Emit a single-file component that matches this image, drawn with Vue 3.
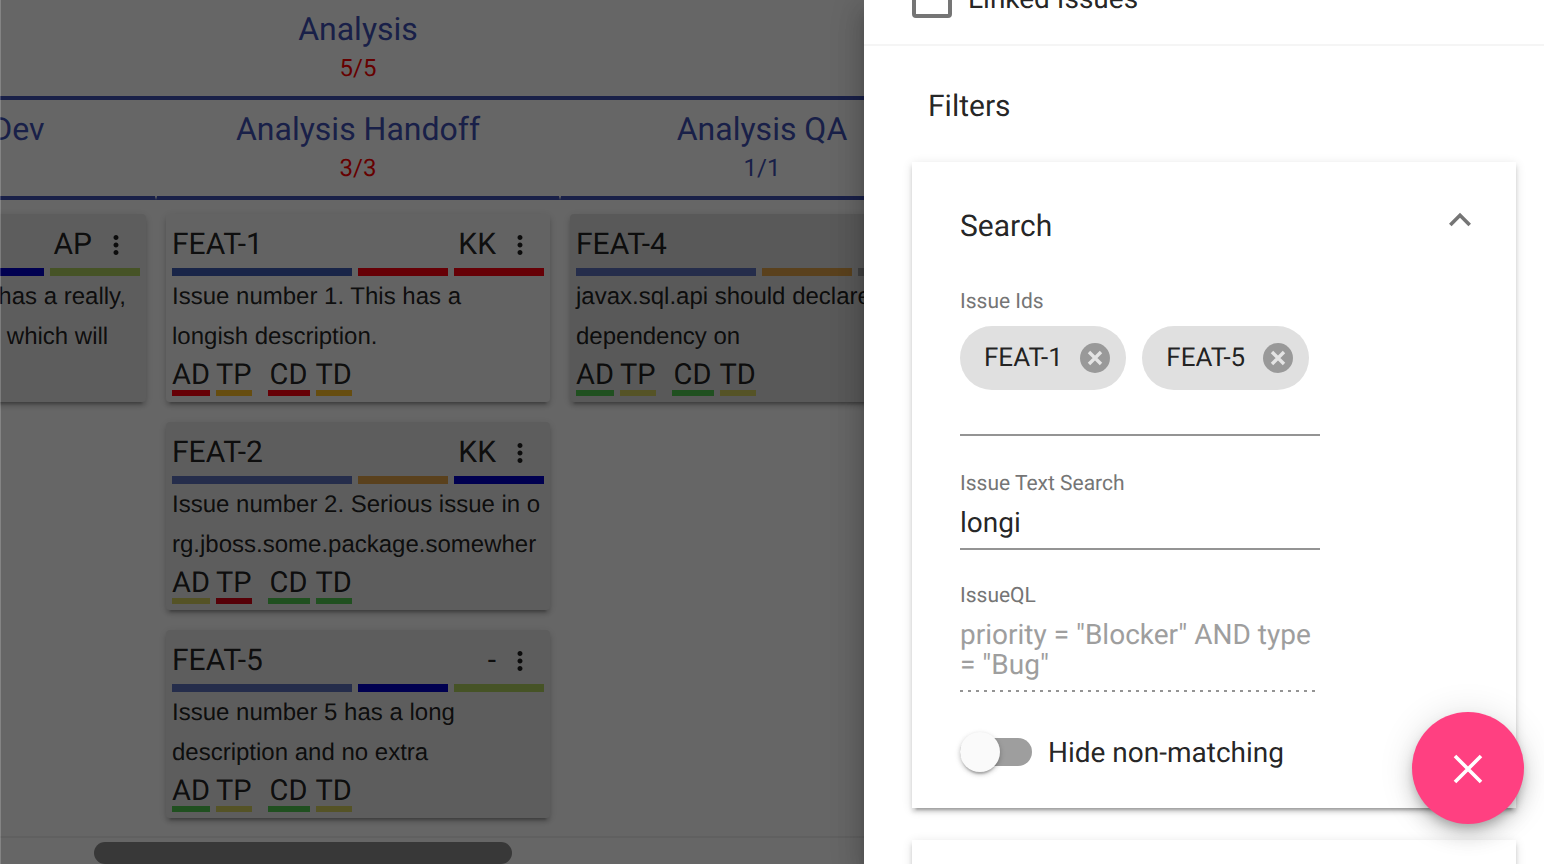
<template>
  <div class="page">
    <!-- 看板 -->
    <div class="board">
      <div class="board-view">
        <div class="board-inner">
          <div class="group-head">
            <div class="head-title">Analysis</div>
            <div class="head-count over">5/5</div>
          </div>
          <div class="state-heads">
            <div v-for="col in columns" :key="col.name" class="state-head">
              <div class="head-title">{{ col.name }}</div>
              <div class="head-count" :class="{ over: col.over }">{{ col.count }}</div>
            </div>
          </div>
          <div class="state-cols">
            <div v-for="col in columns" :key="col.name" class="state-col">
              <div
                v-for="issue in col.issues"
                :key="issue.key"
                class="issue"
                :class="issue.shade">
                <div class="issue-top">
                  <span class="issue-key">{{ issue.key }}</span>
                  <span class="issue-owner">{{ issue.owner }}</span>
                  <svg class="kebab" viewBox="0 0 24 24">
                    <path d="M12 8c1.1 0 2-.9 2-2s-.9-2-2-2-2 .9-2 2 .9 2 2 2zm0 2c-1.1 0-2 .9-2 2s.9 2 2 2 2-.9 2-2-.9-2-2-2zm0 6c-1.1 0-2 .9-2 2s.9 2 2 2 2-.9 2-2-.9-2-2-2z" />
                  </svg>
                </div>
                <div class="issue-bars">
                  <span class="bar wide" :class="issue.bars[0]"></span>
                  <span class="bar" :class="issue.bars[1]"></span>
                  <span class="bar" :class="issue.bars[2]"></span>
                </div>
                <div v-for="line in issue.lines" :key="line" class="issue-line">{{ line }}</div>
                <div class="issue-tags">
                  <span
                    v-for="(tag, i) in tags"
                    :key="tag"
                    class="tag"
                    :class="['tag-' + tag, issue.tags[i]]">{{ tag }}</span>
                </div>
              </div>
            </div>
          </div>
        </div>
      </div>
      <div class="hscroll">
        <div class="hscroll-thumb"></div>
      </div>
      <div class="backdrop"></div>
    </div>

    <!-- 右侧设置面板 -->
    <div class="panel">
      <div class="panel-top">
        <div class="linked">
          <span class="checkbox"></span>
          <span>Linked Issues</span>
        </div>
      </div>
      <div class="panel-title">Filters</div>

      <div class="card">
        <div class="card-head">
          <span class="card-title">Search</span>
          <svg class="chevron" viewBox="0 0 24 24">
            <path d="M12 8l-6 6 1.41 1.41L12 10.83l4.59 4.58L18 14z" />
          </svg>
        </div>

        <div class="field-label first">Issue Ids</div>
        <div class="chips">
          <div v-for="id in selectedIds" :key="id" class="chip">
            <span>{{ id }}</span>
            <svg class="chip-x" viewBox="0 0 30 30">
              <circle cx="15" cy="15" r="15" />
              <path d="M9 9l12 12M21 9L9 21" />
            </svg>
          </div>
        </div>

        <div class="field-label">Issue Text Search</div>
        <div class="text-value">longi</div>

        <div class="field-label ql">IssueQL</div>
        <div class="ql-input">priority = "Blocker" AND type<br />= "Bug"</div>

        <div class="toggle-row">
          <div class="toggle">
            <span class="toggle-thumb"></span>
          </div>
          <span>Hide non-matching</span>
        </div>
      </div>

      <div class="card next"></div>
    </div>

    <div class="fab">
      <svg viewBox="0 0 32 32">
        <path d="M3 3l26 26M29 3L3 29" />
      </svg>
    </div>
  </div>
</template>

<script setup>
const tags = ['AD', 'TP', 'CD', 'TD']
const selectedIds = ['FEAT-1', 'FEAT-5']

const columns = [
  {
    name: 'Analysis Dev',
    count: '1/1',
    over: false,
    issues: [
      {
        key: 'FEAT-3',
        owner: 'AP',
        shade: 'shade-b',
        bars: ['c-indigo', 'c-navy', 'c-olive'],
        lines: ['Issue number 3. This has a really,', 'really long description which will'],
        tags: ['c-green', 'c-khaki', 'c-green', 'c-khaki']
      }
    ]
  },
  {
    name: 'Analysis Handoff',
    count: '3/3',
    over: true,
    issues: [
      {
        key: 'FEAT-1',
        owner: 'KK',
        shade: 'shade-a',
        bars: ['c-indigo', 'c-red', 'c-red'],
        lines: ['Issue number 1. This has a', 'longish description.'],
        tags: ['c-red', 'c-orange', 'c-red', 'c-orange']
      },
      {
        key: 'FEAT-2',
        owner: 'KK',
        shade: 'shade-b',
        bars: ['c-slate', 'c-orange2', 'c-navy'],
        lines: ['Issue number 2. Serious issue in o', 'rg.jboss.some.package.somewher'],
        tags: ['c-khaki', 'c-red2', 'c-green', 'c-green']
      },
      {
        key: 'FEAT-5',
        owner: '-',
        shade: 'shade-b',
        bars: ['c-slate', 'c-navy', 'c-olive'],
        lines: ['Issue number 5 has a long', 'description and no extra'],
        tags: ['c-green', 'c-khaki', 'c-green', 'c-khaki']
      }
    ]
  },
  {
    name: 'Analysis QA',
    count: '1/1',
    over: false,
    issues: [
      {
        key: 'FEAT-4',
        owner: '',
        shade: 'shade-c',
        bars: ['c-slate', 'c-orange2', 'c-grey'],
        lines: ['javax.sql.api should declare a', 'dependency on'],
        tags: ['c-green', 'c-khaki', 'c-green', 'c-khaki']
      }
    ]
  }
]
</script>

<style>
html,
body {
  margin: 0;
  overflow: hidden;
  background: #fff;
}
</style>

<style scoped>
.page {
  position: relative;
  display: flex;
  width: 1544px;
  height: 864px;
  overflow: hidden;
  font-family: Roboto, "Liberation Sans", sans-serif;
  text-rendering: geometricPrecision;
  color: rgba(0, 0, 0, 0.87);
}

/* 看板 */
.board {
  position: relative;
  display: flex;
  flex-direction: column;
  width: 864px;
  flex-shrink: 0;
  background: #fff;
}

.board-view {
  flex: 1;
  min-height: 0;
  overflow: hidden;
}

.board-inner {
  width: 1212px;
  margin-left: -248px;
}

.group-head,
.state-head {
  box-sizing: border-box;
  height: 100px;
  padding-top: 9px;
  text-align: center;
  color: #3f51b5;
  border-bottom: 4px solid #3f51b5;
}

.state-heads {
  display: flex;
}

.state-head {
  width: 404px;
  border-left: 1px solid transparent;
  border-right: 1px solid transparent;
}

.head-title {
  font-size: 32px;
  line-height: 40px;
}

.head-count {
  font-size: 24px;
  line-height: 38px;
}

.head-count.over {
  color: #ff0000;
}

.state-cols {
  display: flex;
}

.state-col {
  display: flex;
  flex-direction: column;
  gap: 20px;
  box-sizing: border-box;
  width: 404px;
  padding: 14px 10px 0;
}

.issue {
  box-sizing: border-box;
  height: 188px;
  padding: 6px;
  overflow: hidden;
  border-radius: 4px;
  box-shadow: 0 6px 2px -4px rgba(0, 0, 0, 0.2), 0 4px 4px 0 rgba(0, 0, 0, 0.14), 0 2px 10px 0 rgba(0, 0, 0, 0.12);
}

.shade-a {
  background: #f8f8f8;
}

.shade-b {
  background: #e8e8e8;
}

.shade-c {
  background: #dedede;
}

.issue-top {
  display: flex;
  align-items: center;
  height: 48px;
  font-size: 30px;
}

.issue-key {
  flex: 1;
}

.kebab {
  width: 48px;
  height: 30px;
  padding-top: 2px;
  fill: rgba(0, 0, 0, 0.87);
}

.issue-bars {
  display: flex;
  gap: 6px;
  height: 8px;
}

.bar {
  width: 90px;
  flex-shrink: 0;
  background: var(--c);
}

.bar.wide {
  width: 180px;
}

.issue-line {
  height: 40px;
  font-family: "Liberation Sans", Arial, sans-serif;
  font-size: 24px;
  line-height: 42px;
  white-space: nowrap;
}

.issue-tags {
  display: flex;
  gap: 6px;
  height: 40px;
  font-size: 29px;
  line-height: 38px;
}

.tag {
  box-sizing: border-box;
  height: 40px;
  border-bottom: 6px solid var(--c);
}

.tag-CD {
  width: 42px;
  margin-left: 10px;
  text-align: center;
}

.c-indigo {
  --c: #3f5cb5;
}

.c-slate {
  --c: #5c72bc;
}

.c-red {
  --c: #ff0010;
}

.c-red2 {
  --c: #d60012;
}

.c-orange {
  --c: #ffc028;
}

.c-orange2 {
  --c: #e0a24a;
}

.c-navy {
  --c: #0000c8;
}

.c-olive {
  --c: #b0d060;
}

.c-green {
  --c: #50c850;
}

.c-khaki {
  --c: #d4d060;
}

.c-grey {
  --c: #a0a0a0;
}

.hscroll {
  box-sizing: border-box;
  height: 28px;
  flex-shrink: 0;
  padding: 4px 0 0 94px;
  border-top: 2px solid #f0f0f0;
}

.hscroll-thumb {
  width: 418px;
  height: 22px;
  border-radius: 11px;
  background: #8c8c8c;
}

.backdrop {
  position: absolute;
  inset: 0;
  background: rgba(0, 0, 0, 0.6);
  box-shadow: inset 1px 0 0 rgba(255, 255, 255, 0.2);
}

/* 右侧面板 */
.panel {
  position: relative;
  z-index: 2;
  flex: 1;
  min-width: 0;
  height: 864px;
  background: #fff;
  box-shadow: 0 8px 10px -5px rgba(0, 0, 0, 0.2), 0 16px 24px 2px rgba(0, 0, 0, 0.14), 0 6px 30px 5px rgba(0, 0, 0, 0.12);
}

.panel-top {
  display: flex;
  align-items: flex-end;
  box-sizing: border-box;
  height: 46px;
  padding: 0 0 26px 48px;
  border-bottom: 2px solid #f5f5f5;
}

.linked {
  display: flex;
  align-items: center;
  flex-shrink: 0;
  gap: 16px;
  height: 40px;
  font-size: 28px;
}

.checkbox {
  box-sizing: border-box;
  width: 40px;
  height: 40px;
  border: 4px solid #757575;
  border-radius: 4px;
}

.panel-title {
  height: 40px;
  padding: 40px 0 36px 64px;
  font-size: 30px;
  line-height: 42px;
}

.card {
  box-sizing: border-box;
  width: 604px;
  height: 646px;
  margin-left: 48px;
  padding: 44px 0 0 48px;
  background: #fff;
  box-shadow: 0 6px 2px -4px rgba(0, 0, 0, 0.2), 0 4px 4px 0 rgba(0, 0, 0, 0.14), 0 2px 10px 0 rgba(0, 0, 0, 0.12);
}

.card.next {
  margin-top: 32px;
  height: 100px;
}

.card-head {
  display: flex;
  align-items: center;
  justify-content: space-between;
  height: 40px;
  padding-right: 34px;
  font-size: 30px;
  line-height: 40px;
}

.card-title {
  padding-top: 2px;
}

.chevron {
  width: 44px;
  height: 44px;
  margin-top: -12px;
  fill: #757575;
}

.field-label {
  height: 22px;
  margin-top: 36px;
  font-size: 21px;
  line-height: 24px;
  color: #757575;
}

.field-label.first {
  margin-top: 44px;
}

.field-label.ql {
  margin-top: 34px;
}

.chips {
  display: flex;
  gap: 16px;
  box-sizing: border-box;
  width: 360px;
  height: 110px;
  margin-top: 14px;
  border-bottom: 2px solid #949494;
}

.chip {
  display: flex;
  align-items: center;
  gap: 17.5px;
  box-sizing: border-box;
  height: 64px;
  padding: 0 16px 0 24px;
  border-radius: 32px;
  background: #e0e0e0;
  font-size: 26px;
}

.chip-x {
  width: 30px;
  height: 30px;
}

.chip-x circle {
  fill: #999;
}

.chip-x path {
  fill: none;
  stroke: #e4e4e4;
  stroke-width: 3.4;
}

.text-value {
  box-sizing: border-box;
  width: 360px;
  height: 46px;
  margin-top: 10px;
  border-bottom: 2px solid #949494;
  font-size: 28px;
  line-height: 38px;
}

.ql-input {
  width: 360px;
  margin-top: 14px;
  padding-bottom: 12px;
  font-size: 28px;
  line-height: 30px;
  color: #9e9e9e;
  background-image: linear-gradient(to right, rgba(0, 0, 0, 0.42) 0, rgba(0, 0, 0, 0.42) 33%, transparent 0);
  background-size: 8px 2px;
  background-repeat: repeat-x;
  background-position: 0 bottom;
}

.toggle-row {
  display: flex;
  align-items: center;
  gap: 16px;
  height: 40px;
  margin-top: 40px;
  font-size: 28px;
}

.toggle {
  position: relative;
  width: 72px;
  height: 28px;
  border-radius: 14px;
  background: #9e9e9e;
}

.toggle-thumb {
  position: absolute;
  top: -6px;
  left: 0;
  width: 40px;
  height: 40px;
  border-radius: 50%;
  background: #fafafa;
  box-shadow: 0 4px 2px -2px rgba(0, 0, 0, 0.2), 0 2px 4px 0 rgba(0, 0, 0, 0.14), 0 2px 6px 0 rgba(0, 0, 0, 0.12);
}

.fab {
  position: absolute;
  right: 20px;
  bottom: 40px;
  z-index: 3;
  display: flex;
  align-items: center;
  justify-content: center;
  width: 112px;
  height: 112px;
  border-radius: 50%;
  background: #ff4081;
  box-shadow: 0 6px 10px -2px rgba(0, 0, 0, 0.2), 0 12px 20px 0 rgba(0, 0, 0, 0.14), 0 2px 36px 0 rgba(0, 0, 0, 0.12);
}

.fab svg {
  width: 32px;
  height: 32px;
  margin-top: 2px;
  fill: none;
  stroke: #fff;
  stroke-width: 3.6;
}
</style>
